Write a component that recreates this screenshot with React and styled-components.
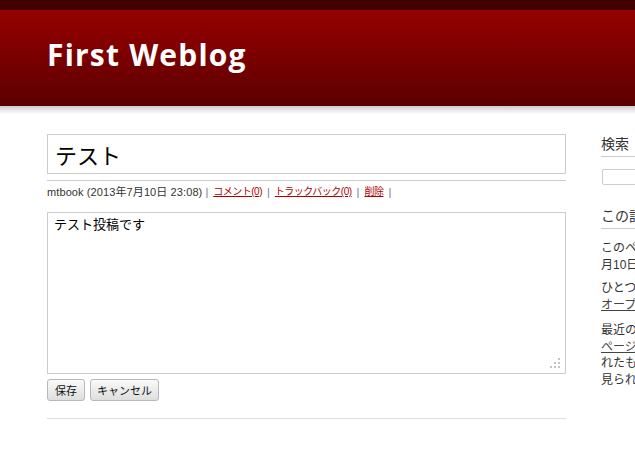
import React from "react";
import styled, { createGlobalStyle } from "styled-components";

const Global = createGlobalStyle`
  html, body { margin: 0; padding: 0; overflow: hidden; background: #fff; }
  body { font-family: "Liberation Sans", "Noto Sans CJK JP", sans-serif; color: #333; }
`;

const TopBand = styled.div`
  height: 10px;
  background: #420003;
`;

const Header = styled.header`
  height: 96px;
  background: linear-gradient(#960000, #5c0000);
  display: flex;
  align-items: center;
  padding: 0 0 6px 47px;
  box-sizing: border-box;
`;

const SiteTitle = styled.h1`
  margin: 0;
  font-family: "Open Sans", "DejaVu Sans", sans-serif;
  font-weight: 700;
  font-size: 30px;
  line-height: 1;
  letter-spacing: 1.2px;
  color: #fff;
`;

const HeaderShadow = styled.div`
  height: 8px;
  background: linear-gradient(#cdcdcd, #fff);
`;

const Layout = styled.div`
  display: flex;
  gap: 35px;
  padding: 20px 0 0 47px;
`;

const Main = styled.main`
  width: 519px;
  flex-shrink: 0;
`;

const TitleInput = styled.input`
  display: block;
  box-sizing: border-box;
  width: 100%;
  height: 40px;
  border: 1px solid #ccc;
  padding: 0 7px;
  font-family: "Liberation Sans", "Noto Sans CJK JP", sans-serif;
  font-size: 22px;
  color: #000;
  outline: none;
`;

const Meta = styled.div`
  margin-top: 6px;
  border-top: 1px solid #ccc;
  padding-top: 3px;
  font-size: 11px;
  line-height: 16px;
  color: #333;
  display: flex;
  align-items: center;
  white-space: nowrap;
`;

const Author = styled.span`
  letter-spacing: 0.1px;
`;

const Sep = styled.span`
  color: #6a7a9a;
  margin: 0 5px 0 ${(p) => (p.$first ? 3 : 5)}px;
`;

const MetaLink = styled.a`
  color: #b00000;
  text-decoration: underline;
  font-size: 10px;
  letter-spacing: -0.5px;
`;

const EditorWrap = styled.div`
  position: relative;
  margin-top: 12px;
`;

const Body = styled.textarea`
  display: block;
  box-sizing: border-box;
  width: 100%;
  height: 162px;
  border: 1px solid #ccc;
  padding: 4px 6px;
  font-family: "Liberation Sans", "Noto Sans CJK JP", sans-serif;
  font-size: 13px;
  line-height: 16px;
  color: #000;
  resize: none;
  outline: none;
`;

const Grip = styled.svg`
  position: absolute;
  right: 6px;
  bottom: 6px;
`;

const Buttons = styled.div`
  display: flex;
  gap: 5px;
  margin-top: 5px;
`;

const Button = styled.button`
  height: 22px;
  padding: 0 ${(p) => p.$pad}px;
  border: 1px solid #b8b8b8;
  border-radius: 3px;
  background: linear-gradient(#fafafa, #dedede);
  font-family: "Liberation Sans", "Noto Sans CJK JP", sans-serif;
  font-size: 11px;
  color: #111;
`;

const Rule = styled.hr`
  margin: 17px 0 0;
  border: 0;
  border-top: 1px solid #ddd;
`;

const Sidebar = styled.aside`
  width: 200px;
  flex-shrink: 0;
`;

const Section = styled.section`
  margin-top: ${(p) => p.$top || 0}px;
`;

const SideHeading = styled.h2`
  margin: 0;
  font-size: 14px;
  font-weight: normal;
  line-height: 20px;
  padding-bottom: 2px;
  border-bottom: 1px solid #ccc;
  color: #333;
`;

const SearchBox = styled.input`
  display: block;
  box-sizing: border-box;
  margin: 12px 0 0 1px;
  width: 160px;
  height: 16px;
  border: 1px solid #ccc;
  border-radius: 2px;
`;

const Para = styled.p`
  margin: ${(p) => p.$top}px 0 0;
  font-size: 12px;
  line-height: 16.5px;
  color: #333;
  white-space: nowrap;
`;

const SideLink = styled.a`
  color: #444;
  text-decoration: underline;
`;

export default function App() {
  return (
    <>
      <Global />
      <TopBand />
      <Header>
        <SiteTitle>First Weblog</SiteTitle>
      </Header>
      <HeaderShadow />
      <Layout>
        <Main>
          <TitleInput defaultValue="テスト" />
          <Meta>
            <Author>mtbook (2013年7月10日 23:08)</Author>
            <Sep $first>|</Sep>
            <MetaLink href="#">コメント(0)</MetaLink>
            <Sep>|</Sep>
            <MetaLink href="#">トラックバック(0)</MetaLink>
            <Sep>|</Sep>
            <MetaLink href="#">削除</MetaLink>
            <Sep>|</Sep>
          </Meta>
          <EditorWrap>
            <Body defaultValue="テスト投稿です" />
            <Grip width="10" height="10" viewBox="0 0 10 10">
              <g fill="#c4c4c4">
                <rect x="8" y="0" width="2" height="2" />
                <rect x="4" y="4" width="2" height="2" />
                <rect x="8" y="4" width="2" height="2" />
                <rect x="0" y="8" width="2" height="2" />
                <rect x="4" y="8" width="2" height="2" />
                <rect x="8" y="8" width="2" height="2" />
              </g>
            </Grip>
          </EditorWrap>
          <Buttons>
            <Button $pad={7}>保存</Button>
            <Button $pad={6}>キャンセル</Button>
          </Buttons>
          <Rule />
        </Main>
        <Sidebar>
          <Section>
            <SideHeading>検索</SideHeading>
            <SearchBox />
          </Section>
          <Section $top={21}>
            <SideHeading>この記事について</SideHeading>
            <Para $top={11}>
              このページは、mtbookが2013年7
              <br />
              月10日 23:08に書いたブログ記事です。
            </Para>
            <Para $top={7}>
              ひとつ前のブログ記事は「
              <br />
              <SideLink href="#">オープンソースへの招待</SideLink>」です。
            </Para>
            <Para $top={9}>
              最近のコンテンツは<SideLink href="#">インデックス</SideLink>
              <br />
              <SideLink href="#">ページ</SideLink>で見られます。過去に書か
              <br />
              れたものは<SideLink href="#">アーカイブのページ</SideLink>で
              <br />
              見られます。
            </Para>
          </Section>
        </Sidebar>
      </Layout>
    </>
  );
}
